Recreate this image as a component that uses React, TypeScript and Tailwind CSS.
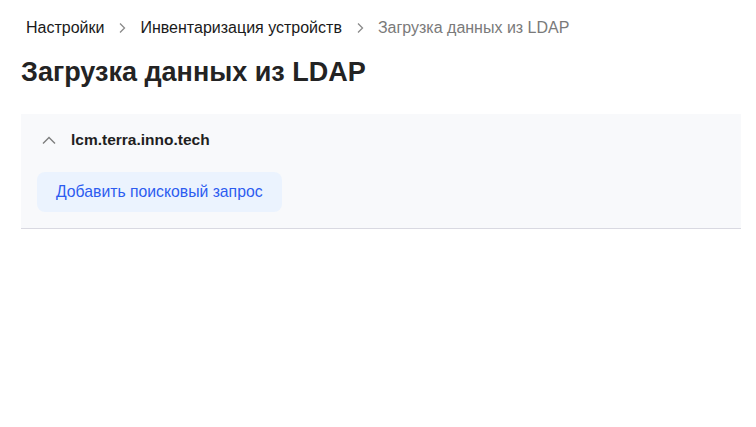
import React from 'react';

const Chevron: React.FC = () => (
  <svg width="10" height="12" viewBox="0 0 10 12" className="mx-[13px] shrink-0">
    <path d="M3 1.5 L7.5 6 L3 10.5" fill="none" stroke="#8a8a8a" strokeWidth="1.3" />
  </svg>
);

export default function App() {
  const [open, setOpen] = React.useState(true);

  return (
    <div className="min-h-[427px] bg-white font-['Liberation_Sans',Arial,sans-serif]">
      <nav className="flex items-center pl-[26px] pt-[18px] text-[16px] leading-[20px] text-[#1a1a1a]">
        <span>Настройки</span>
        <Chevron />
        <span>Инвентаризация устройств</span>
        <Chevron />
        <span className="text-[#7a7a7a]">Загрузка данных из LDAP</span>
      </nav>

      <h1 className="pl-[21px] pt-[18px] text-[27px] font-bold leading-[32px] text-[#232323]">
        Загрузка данных из LDAP
      </h1>

      <div className="ml-[21px] mr-[15px] mt-[26px] border-b border-[#d9d9e1] bg-[#f8f9fb]">
        <button
          onClick={() => setOpen(!open)}
          className="flex items-center gap-[14px] pl-[20px] pt-[16px] text-[15.5px] font-bold leading-[20px] text-[#1f1f1f]"
        >
          <svg width="16" height="10" viewBox="0 0 16 10" className={open ? '' : 'rotate-180'}>
            <path d="M2 8.5 L8 2.5 L14 8.5" fill="none" stroke="#7d7d7d" strokeWidth="1.4" />
          </svg>
          lcm.terra.inno.tech
        </button>
        {open && (
          <div className="pb-[16px] pl-[16px] pt-[22px]">
            <button className="h-[40px] rounded-[8px] bg-[#ebf3fe] px-[19px] text-[15.75px] text-[#2c5cf0]">
              Добавить поисковый запрос
            </button>
          </div>
        )}
      </div>
    </div>
  );
}
